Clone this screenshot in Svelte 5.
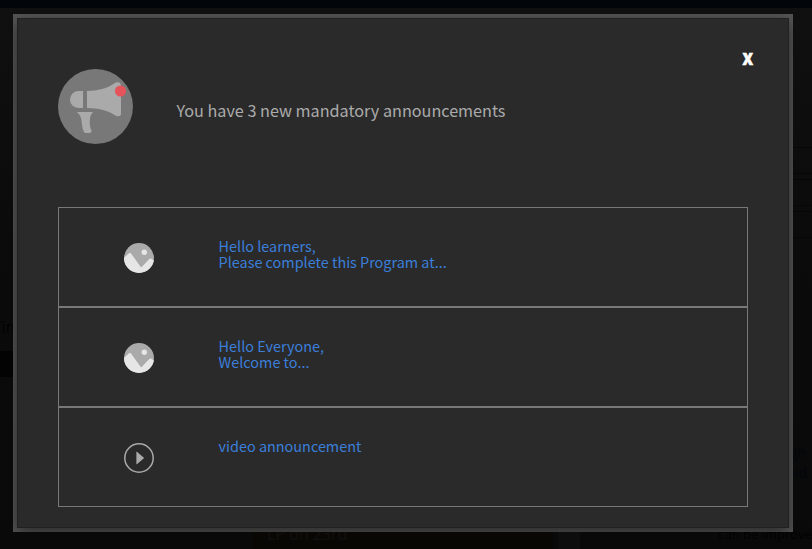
<script>
  const announcements = [
    { kind: 'image', lines: ['Hello learners,', 'Please complete this Program at...'] },
    { kind: 'image', lines: ['Hello Everyone,', 'Welcome to...'] },
    { kind: 'video', lines: ['video announcement'] }
  ];
  const rules = [147, 173, 179, 205, 211, 237];
</script>

<div class="page">
  <div class="topbar"></div>
  {#each rules as y (y)}
    <i class="rule" style="top: {y}px"></i>
  {/each}
  <div class="strip"></div>
  <div class="card"></div>
  <div class="side"></div>
  <span class="ghost timer">Tim</span>
  <span class="ghost lp">LP on 23rd</span>
  <span class="ghost blue through">through</span>
  <span class="ghost blue avoid">avoid</span>
  <span class="ghost improve">can be improve</span>

  <div class="frame">
    <section class="modal">
      <button class="close" aria-label="Close">X</button>
      <header>
        <svg width="76" height="76" viewBox="0 0 76 76">
          <circle cx="37.5" cy="37.5" r="37.5" fill="#787878" />
          <g fill="#aaa">
            <path d="M25 22h-4.500a8.500 8.500 0 0 0 0 17H25z" />
            <path d="M29 22C40 21.600 49 19.500 56.500 14.200Q58 13.200 60 13.300Q62.800 13.500 63 17V45Q63 47 61 47.200Q58.500 47.400 56.500 46C49 41 40 39.200 29 39z" />
            <path d="M19 43H35C33 45.500 32 47 31.800 51C31.500 55 32 58.500 33.400 61.300Q33.700 64 31.500 64H27.500Q26 63.800 25.500 62C23.500 58 24.200 53 23 49Q22.300 46 19 43z" />
          </g>
          <circle cx="62.500" cy="22" r="5.600" fill="#e5535b" />
        </svg>
        <h1>You have 3 new mandatory announcements</h1>
      </header>
      <ul>
        {#each announcements as item, i}
          <li>
            <span class="icon">
              {#if item.kind === 'image'}
                <svg width="30" height="30" viewBox="0 0 30 30">
                  <clipPath id="disc-{i}"><circle cx="15" cy="15" r="15" /></clipPath>
                  <g clip-path="url(#disc-{i})">
                    <path d="M0 0H30V30H0z" fill="#aaa" />
                    <path d="M0 14.800L5 10.300Q6 9.300 7 10.400L16.400 23.500Q17.300 24.600 18.200 23.500L25.300 15.900Q26.500 14.700 30 17.500V30H0z" fill="#e6e6e6" />
                    <circle cx="20.300" cy="9.300" r="2.700" fill="#e6e6e6" />
                  </g>
                </svg>
              {:else}
                <svg width="30" height="30" viewBox="0 0 30 30">
                  <circle cx="15" cy="15" r="14.200" fill="none" stroke="#aaa" stroke-width="1.500" />
                  <path d="M12.400 9.300Q12.400 8.500 13.200 9.100L19.600 14.600Q20 15 19.600 15.400L13.200 21.100Q12.400 21.600 12.400 20.700z" fill="#aaa" />
                </svg>
              {/if}
            </span>
            <span class="text">
              {#each item.lines as line}<span>{line}</span>{/each}
            </span>
          </li>
        {/each}
      </ul>
    </section>
  </div>
</div>

<style>
  :global(body) { margin: 0; background: #0c0c0c; }
  .page {
    position: relative;
    width: 812px;
    height: 549px;
    box-sizing: border-box;
    padding: 14px 19px 0 13px;
    overflow: hidden;
    background: linear-gradient(#101010, #0b0b0b 40%, #090909);
    font-family: "Noto Sans CJK SC", "Noto Sans", sans-serif;
  }
  .topbar { position: absolute; left: 0; top: 0; width: 100%; height: 8px; background: #02060b; }
  .rule { position: absolute; left: 793px; width: 19px; height: 1px; background: #060606; }
  .strip { position: absolute; left: 0; top: 351px; width: 13px; height: 26px; background: #030303; }
  .card { position: absolute; left: 253px; top: 500px; width: 300px; height: 49px; background: #080704; }
  .side { position: absolute; left: 558px; top: 500px; width: 22px; height: 49px; background: #0d0d0e; }
  .ghost {
    position: absolute;
    font: 16px/20px "Open Sans", sans-serif;
    color: #020202;
    white-space: nowrap;
  }
  .timer { left: -7px; top: 317px; }
  .lp { left: 267px; top: 524px; color: #12100e; }
  .blue { color: #03060b; font-size: 14px; }
  .through { right: 6px; top: 443px; }
  .avoid { right: 5px; top: 463px; }
  .improve { right: 0; top: 524px; font-size: 13px; }
  .frame {
    position: relative;
    box-sizing: border-box;
    width: 780px;
    height: 518px;
    padding: 4px;
    overflow: hidden;
    background: #555;
  }
  .modal {
    position: relative;
    box-sizing: border-box;
    height: 510px;
    padding: 50px 40px 0;
    border: 1px solid #212121;
    background: #2a2a2a;
    box-shadow: 0 5px 15px rgba(0, 0, 0, 0.5);
  }
  .close {
    position: absolute;
    right: 35px;
    top: 29px;
    padding: 0;
    border: 0;
    background: none;
    color: #fff;
    font: 900 16px/20px "Noto Sans CJK SC", sans-serif;
    -webkit-text-stroke: 0.7px #fff;
  }
  header { display: flex; gap: 42.4px; height: 138px; }
  header svg { flex: none; }
  h1 {
    margin: 31px 0 0;
    color: #aaa;
    font-size: 16.2px;
    font-weight: 400;
    line-height: 20px;
    white-space: nowrap;
  }
  ul { width: 690px; margin: 0; padding: 0; list-style: none; }
  li {
    display: flex;
    box-sizing: border-box;
    height: 100px;
    border: 1px solid #787878;
  }
  .icon { flex: none; width: 29.6px; padding: 35px 0 0 65px; }
  .icon svg { display: block; }
  .text {
    display: flex;
    flex-direction: column;
    padding: 30px 0 0 65px;
    color: #3b7fdb;
    font-size: 14.42px;
    line-height: 16px;
    white-space: nowrap;
  }
</style>
